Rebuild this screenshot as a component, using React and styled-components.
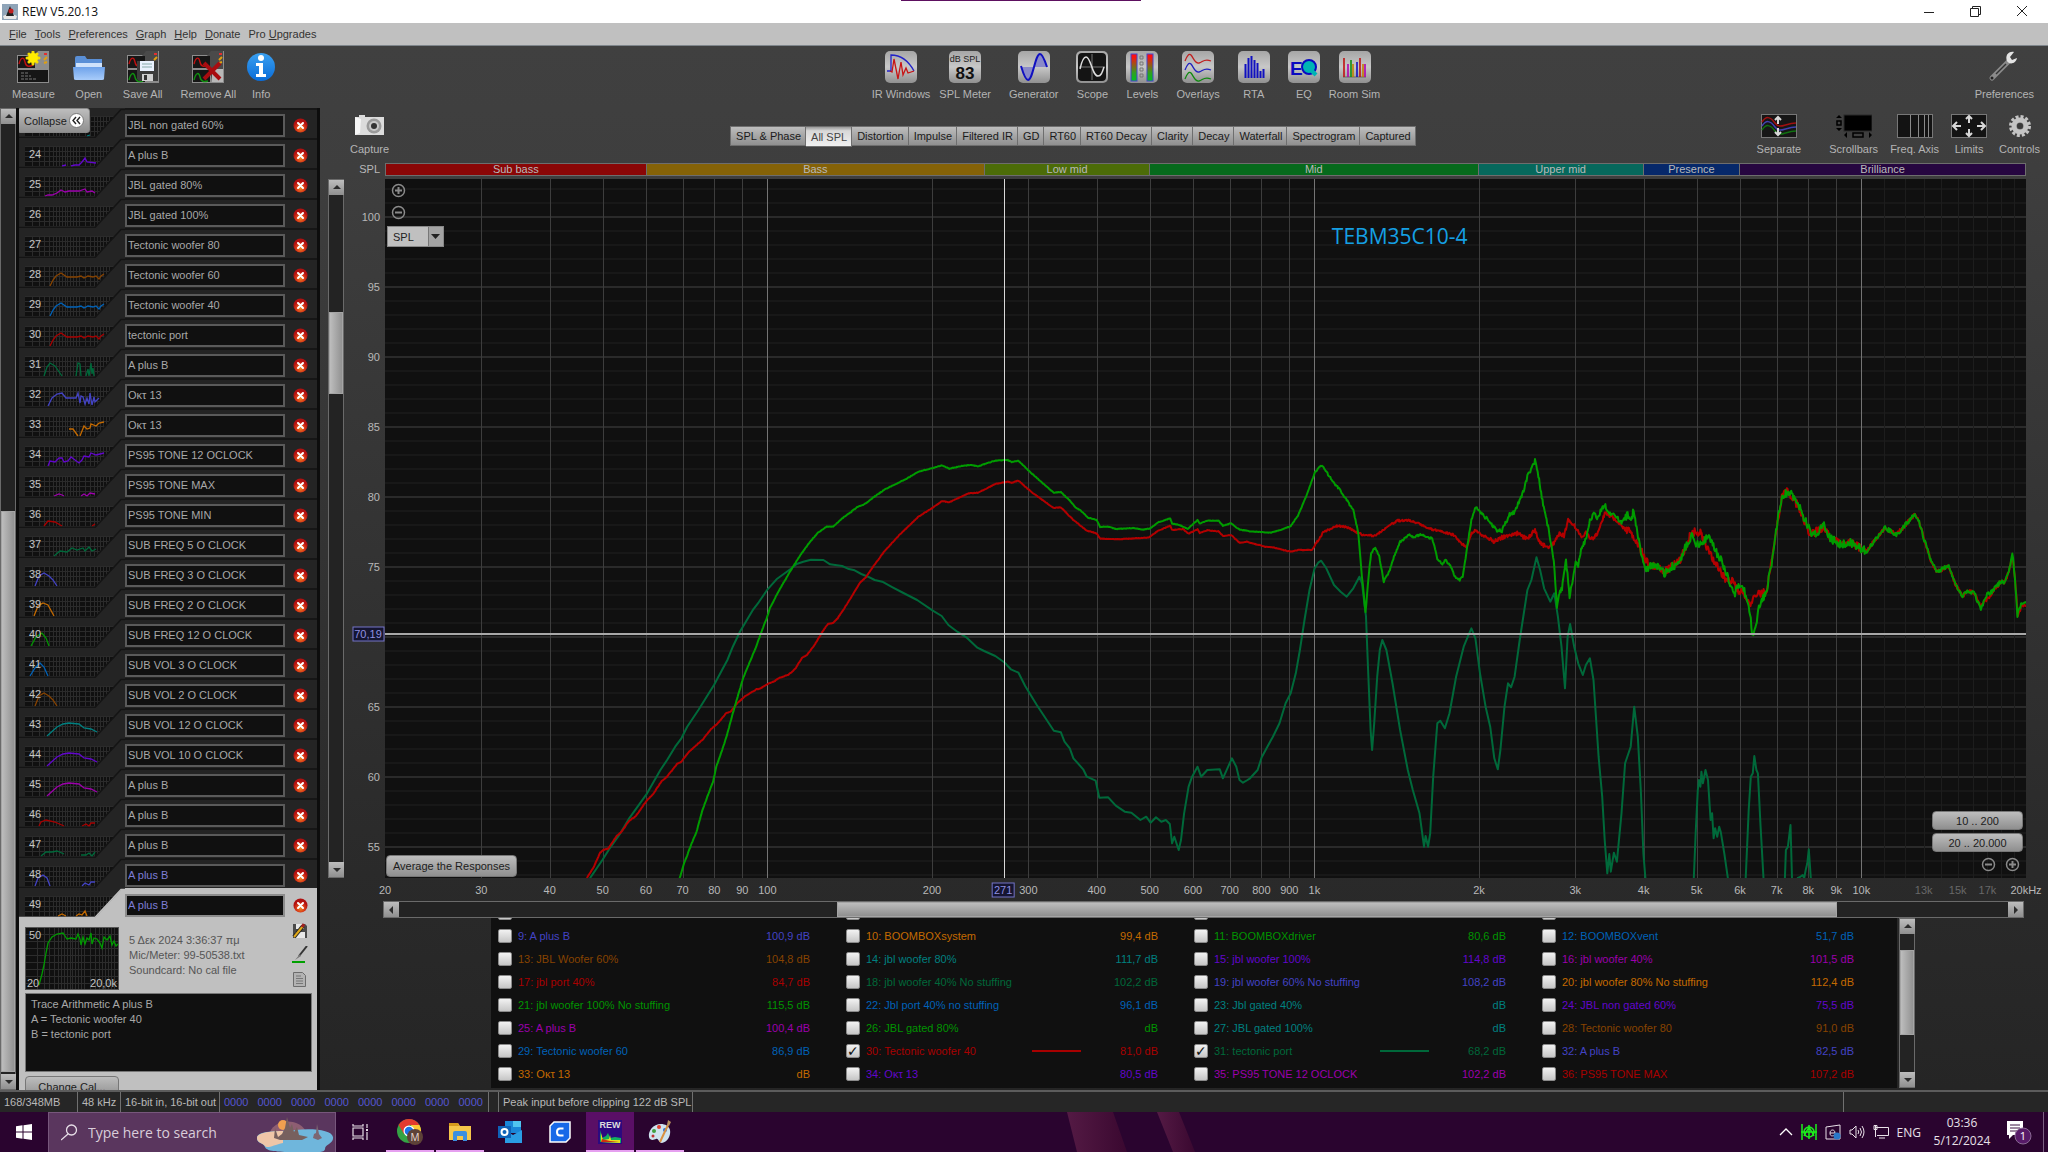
import React from 'react'
import styled, { createGlobalStyle, css } from 'styled-components'

const GlobalStyle = createGlobalStyle`
  * { box-sizing: border-box; }
  body {
    margin: 0;
    background: #262626;
    font-family: "Liberation Sans", Arial, sans-serif;
    font-size: 11px;
    overflow: hidden;
  }
  button, input, select, textarea {
    font: inherit;
    margin: 0;
    padding: 0;
    border-radius: 0;
  }
  svg { display: block; }
`

const silver = 'linear-gradient(#bdbdbd, #8f8f8f)'

const C = {
  indigo: '#4343c4',
  orange: '#c46a00',
  green: '#009400',
  blue: '#0062b8',
  brown: '#874300',
  teal: '#008080',
  violet: '#6206cc',
  magenta: '#9c00ac',
  red: '#a80000',
  forest: '#00683a',
}

/* ---------- window ---------- */

const Window = styled.div`
  display: flex;
  flex-direction: column;
  height: 100vh;
  overflow: hidden;
`

const TitleBar = styled.header`
  flex: none;
  display: flex;
  align-items: center;
  height: 23px;
  padding: 0 2px;
  background: #fff;
  color: #111;
  font-family: "Open Sans", "Noto Sans", sans-serif;
  font-size: 12px;
  position: relative;
`

const TitleText = styled.span`
  flex: 1;
  padding-left: 4px;
`

const TopStrip = styled.div`
  position: absolute;
  top: 0;
  left: 44%;
  width: 240px;
  height: 1px;
  background: #5d1060;
`

const WinButton = styled.button`
  width: 47px;
  height: 23px;
  border: 0;
  background: none;
  display: grid;
  place-items: center;
`

const MenuBar = styled.nav`
  flex: none;
  display: flex;
  align-items: center;
  gap: 8px;
  height: 23px;
  padding: 0 9px;
  background: #c0c0c0;
  border-bottom: 1px solid #7f868c;
  color: #333;
`

const MenuItem = styled.button`
  border: 0;
  background: none;
  color: inherit;
`

const Body = styled.div`
  flex: 1;
  min-height: 0;
  display: flex;
  flex-direction: column;
  background: linear-gradient(#404040, #3e3e3e 12%, #2b2b2b 75%, #252525);
`

/* ---------- toolbars ---------- */

const Toolbar = styled.div`
  flex: none;
  display: flex;
  justify-content: space-between;
  height: 62px;
  padding: 5px 14px 0 12px;
`

const ToolGroup = styled.div`
  display: flex;
  gap: ${p => p.$gap || 18}px;
`

const Tool = styled.button`
  display: flex;
  flex-direction: column;
  align-items: center;
  align-self: flex-start;
  gap: 5px;
  border: 0;
  background: none;
  color: #b4b4b4;
  line-height: 13px;
  white-space: nowrap;
`

const Main = styled.div`
  flex: 1;
  min-height: 0;
  display: flex;
`

/* ---------- scrollbars ---------- */

const Bar = styled.div`
  display: flex;
  flex-direction: ${p => (p.$row ? 'row' : 'column')};
  background: #232323;
  border: 1px solid #6a6a6a;
  ${p => (p.$row ? 'height: 17px;' : 'width: 16px;')}
`

const ArrowButton = styled.button`
  flex: none;
  width: 15px;
  height: 15px;
  border: 0;
  background: ${silver};
  display: grid;
  place-items: center;
`

const Space = styled.div`
  flex: ${p => p.$grow} 1 0;
`

const Thumb = styled(Space)`
  background: ${p => (p.$row ? silver : 'linear-gradient(90deg, #bdbdbd, #929292)')};
  border: 1px solid #a5a5a5;
`

const arrows = {
  up: '0,5 4,1 8,5',
  down: '0,2 4,6 8,2',
  left: '5,0 1,4 5,8',
  right: '2,0 6,4 2,8',
}

function Arrow({ dir }) {
  return (
    <ArrowButton aria-label={dir}>
      <svg width="8" height="8"><polygon points={arrows[dir]} fill="#2c2c2c" /></svg>
    </ArrowButton>
  )
}

function Scrollbar({ row, parts, className }) {
  return (
    <Bar $row={row} className={className}>
      <Arrow dir={row ? 'left' : 'up'} />
      <Space $grow={parts[0]} />
      <Thumb $row={row} $grow={parts[1]} />
      <Space $grow={parts[2]} />
      <Arrow dir={row ? 'right' : 'down'} />
    </Bar>
  )
}

/* ---------- measurement list ---------- */

const Side = styled.aside`
  flex: none;
  position: relative;
  width: 304px;
  overflow: hidden;
  background: #242424;
  border: solid #0d0d0d;
  border-width: 0 3px;
`

const Row = styled.div`
  display: flex;
  align-items: center;
  height: 30px;
`

const NameBox = styled.input`
  width: 160px;
  height: 23px;
  padding: 0 1px;
  background: #101010;
  border: 2px solid ${p => (p.$active ? '#8c8c8c' : '#5a5a5a')};
  color: ${p => p.$color || '#a8a8a8'};
`

const DeleteButton = styled.button`
  margin-left: 8px;
  width: 15px;
  height: 15px;
  border: 0;
  background: none;
`

const Collapse = styled.button`
  position: absolute;
  left: -2px;
  top: 0;
  width: 73px;
  height: 25px;
  display: flex;
  align-items: center;
  justify-content: space-between;
  padding: 0 5px 0 6px;
  border: 1px solid #888;
  border-radius: 3px;
  background: ${silver};
  color: #1c1c1c;
`

const Details = styled.div`
  height: 172px;
  padding: 9px 5px 0 6px;
  background: #c0c0c0;
`

const DetailTop = styled.div`
  display: flex;
  height: 66px;
`

const DetailText = styled.div`
  flex: 1;
  padding: 6px 0 0 10px;
  line-height: 15px;
  color: #555;
`

const DetailIcons = styled.div`
  display: flex;
  flex-direction: column;
  gap: 7px;
  padding-right: 4px;
  margin-top: -4px;
`

const Notes = styled.textarea`
  display: block;
  width: 100%;
  height: 79px;
  padding: 3px 5px;
  border: 1px solid #777;
  background: #101010;
  color: #a8a8a8;
  line-height: 15px;
  resize: none;
`

const SilverButton = styled.button`
  height: ${p => p.$h || 22}px;
  width: ${p => p.$w}px;
  border: 1px solid #777;
  border-radius: 4px;
  background: ${silver};
  color: #1c1c1c;
  white-space: nowrap;
`

const ChangeCal = styled(SilverButton)`
  display: block;
  margin-top: 4px;
`

const BUMP = '31,28 34,22 37,18 42,15 48,19 58,19 62,18 65,20 69,18 74,19 77,18 80,21 82,18 85,16'
const HUMP = '16,28 20,18 25,15 30,18 34,22 38,28'
const ARCH = '28,28 38,19 44,16 50,15 60,16 65,20 72,21 78,24'

const rows = [
  ['', 'JBL non gated 60%', C.teal, ['68,28 71,27']],
  [24, 'A plus B', C.violet, ['43,28 47,27', '52,28 56,27 60,27 63,24 66,20 68,24 77,25']],
  [25, 'JBL gated 80%', C.magenta, ['26,28 29,27 33,27 38,25 42,22 46,24 50,23 60,23 66,21 68,24 73,23 76,25']],
  [26, 'JBL gated 100%', C.green, []],
  [27, 'Tectonic woofer 80', C.teal, []],
  [28, 'Tectonic woofer 60', C.brown, [BUMP]],
  [29, 'Tectonic woofer 40', C.blue, [BUMP]],
  [30, 'tectonic port', C.red, [BUMP]],
  [31, 'A plus B', C.forest, ['25,28 28,19 31,15 36,18 43,28', '57,28 59,15 61,16 62,28', '67,28 69,21 70,28 72,15 73,26 74,20 75,28']],
  [32, 'Οκτ 13', C.indigo, ['29,28 33,20 38,16 43,15 47,20 57,20 59,15 61,25 62,18 64,19 66,26 68,20 70,26 71,15 73,27 75,19 76,24 80,20']],
  [33, 'Οκτ 13', C.orange, ['50,21 54,21 59,28', '61,28 65,18 68,21 71,20 72,16 77,18 80,15 85,14']],
  [34, 'PS95 TONE 12 OCLOCK', C.violet, ['29,28 31,23 36,24 40,20 43,20 45,24 49,23 52,19 56,22 60,25 63,22 65,18 70,19 72,15 77,17 85,15']],
  [35, 'PS95 TONE MAX', C.magenta, ['35,28 40,26 43,27 45,28', '62,28 65,26 68,28 71,25 76,26']],
  [36, 'PS95 TONE MIN', C.red, ['25,28 29,23 36,24 43,28', '73,28 76,26']],
  [37, 'SUB FREQ 5 O CLOCK', C.forest, ['35,28 41,23 48,24 53,20 58,22 64,20 66,23 70,19 73,23 77,21']],
  [38, 'SUB FREQ 3 O CLOCK', C.indigo, [HUMP]],
  [39, 'SUB FREQ 2 O CLOCK', C.orange, ['15,28 19,18 24,15 29,17 35,28']],
  [40, 'SUB FREQ 12 O CLOCK', C.green, ['12,28 17,19 23,15 27,20 30,28']],
  [41, 'SUB VOL 3 O CLOCK', C.blue, ['11,28 16,20 21,15 25,19 29,28']],
  [42, 'SUB VOL 2 O CLOCK', C.brown, [HUMP]],
  [43, 'SUB VOL 12 O CLOCK', C.teal, [ARCH]],
  [44, 'SUB VOL 10 O CLOCK', C.violet, [ARCH]],
  [45, 'A plus B', C.magenta, [ARCH]],
  [46, 'A plus B', C.red, ['20,28 22,24 27,22 36,24 45,28', '63,28 67,26 70,28 72,25 76,25']],
  [47, 'A plus B', C.forest, ['22,28 27,24 33,24 38,23 45,26', '62,27 67,27 70,25 73,28 76,24']],
  [48, 'A plus B', C.indigo, ['16,28 19,20 24,17 28,20 31,28', '63,28 66,25 70,27 72,24 76,24']],
  [49, 'A plus B', C.orange, ['39,28 43,26 47,28', '57,28 60,26 63,27 66,23 68,28']],
]

const gridX = [13, 20, 25, 30, 34, 37, 40, 43, 46, 48, 51, 54, 57, 60, 66, 71, 75, 78, 81, 84, 87, 90]

function MiniTrace({ num, color, traces, active }) {
  return (
    <svg width="106" height="30">
      <rect x="6" y="8" width="96" height="20" fill="#101010" />
      <g stroke="#2b2b2b">
        {gridX.map(x => <path key={x} d={`M${x + 0.5} 8V28`} />)}
        {[8, 13, 18, 23].map(y => <path key={y} d={`M6 ${y + 0.5}H101`} />)}
      </g>
      {traces.map(t => (
        <polyline key={t} points={t} fill="none" stroke={color} strokeWidth="1.3" />
      ))}
      <polygon points="76,30 103,1 106,1 106,30" fill={active ? '#c0c0c0' : '#242424'} />
      <path d="M0 29.500H76L102 1.500H106" fill="none" stroke={active ? '#c0c0c0' : '#141414'} strokeWidth="1.500" />
      <text x="10" y="20" fill="#c4c4c4" fontSize="11">{num}</text>
    </svg>
  )
}

const RowRest = styled.div`
  flex: 1;
  display: flex;
  align-items: center;
  height: 30px;
  padding-top: 2px;
  border-top: 2px solid ${p => (p.$active ? '#c0c0c0' : '#161616')};
  background: ${p => (p.$active ? '#c0c0c0' : 'none')};
`

function CloseIcon() {
  return (
    <svg width="15" height="15" viewBox="0 0 15 15">
      <circle cx="7.500" cy="7.500" r="7" fill="url(#redball)" />
      <path d="M5 5l5 5M10 5l-5 5" stroke="#fff" strokeWidth="2" strokeLinecap="round" />
    </svg>
  )
}

function Sidebar() {
  return (
    <Side>
      {rows.map(([num, name, color, traces]) => {
        const active = num === 49
        return (
          <Row key={num}>
            <MiniTrace num={num} color={color} traces={traces} active={active} />
            <RowRest $active={active}>
              <NameBox
                aria-label={`Measurement ${num}`}
                defaultValue={name}
                $active={active}
                $color={num >= 48 ? '#7d7dd6' : undefined}
              />
              <DeleteButton aria-label="Remove"><CloseIcon /></DeleteButton>
            </RowRest>
          </Row>
        )
      })}
      <Details>
        <DetailTop>
          <svg width="94" height="63">
            <rect x="0.500" y="0.500" width="93" height="62" fill="#101010" stroke="#555" />
            <g stroke="#2c2c2c">
              {gridX.map(x => <path key={x} d={`M${x - 0.5} 1V62`} />)}
              {[7, 14, 21, 28, 35, 42, 49, 56].map(y => <path key={y} d={`M1 ${y + 0.5}H93`} />)}
            </g>
            <polyline
              points="14,58 17,47 19,38 21,26 23,16 27,10 32,7 38,6 42,12 46,11 51,12 53,7 55,12 56,18 58,10 60,17 62,11 64,13 66,6 67,17 69,11 72,12 75,16 77,21 79,10 82,13 85,9 87,18 89,14 91,19 93,17"
              fill="none" stroke="#009a00" strokeWidth="1.300"
            />
            <text x="4" y="12" fill="#c4c4c4" fontSize="11">50</text>
            <text x="2" y="60" fill="#c4c4c4" fontSize="11">20</text>
            <text x="92" y="60" fill="#c4c4c4" fontSize="11" textAnchor="end">20,0k</text>
          </svg>
          <DetailText>
            <div>5 Δεκ 2024 3:36:37 πμ</div>
            <div>Mic/Meter: 99-50538.txt</div>
            <div>Soundcard: No cal file</div>
          </DetailText>
          <DetailIcons>
            <svg width="16" height="16">
              <path d="M1 1h12l2 2v12H1z" fill="#4a4a4a" />
              <path d="M4 1h8v5H4zM3 9h10v6H3z" fill="#e8e8e8" />
              <path d="M2 14L11 3" stroke="#222" strokeWidth="4" />
              <path d="M2 14L11 3" stroke="#e0a818" strokeWidth="2" />
              <path d="M10 4l2-3" stroke="#a02020" strokeWidth="3" />
            </svg>
            <svg width="16" height="18">
              <path d="M15 0L7 10" stroke="#333" strokeWidth="2" />
              <path d="M8 8l-5 6 6-4z" fill="#777" />
              <path d="M0 16h13" stroke="#00a000" strokeWidth="2" />
            </svg>
            <svg width="16" height="17">
              <path d="M1.500 1.500h9l3 3v11h-12z" fill="#b2b2b2" stroke="#6c6c6c" />
              <path d="M4 5h5M4 7.500h7M4 10h7M4 12.500h7" stroke="#777" />
            </svg>
          </DetailIcons>
        </DetailTop>
        <Notes
          aria-label="Notes"
          defaultValue={'Trace Arithmetic A plus B\nA = Tectonic woofer 40\nB = tectonic port'}
        />
        <ChangeCal $w={94}>Change Cal...</ChangeCal>
      </Details>
      <Collapse>
        Collapse
        <svg width="15" height="15">
          <circle cx="7.500" cy="7.500" r="7" fill="#fff" stroke="#777" />
          <path d="M7 4L4 7.500 7 11M11 4L8 7.500 11 11" fill="none" stroke="#222" strokeWidth="1.400" />
        </svg>
      </Collapse>
    </Side>
  )
}

/* ---------- tool icons ---------- */

function Plate({ dark, children }) {
  return (
    <svg width="32" height="32" viewBox="0 0 32 32">
      <rect width="32" height="32" rx="5" fill="url(#plate)" />
      {dark && <rect x="2" y="2" width="28" height="28" rx="4" fill="#141414" />}
      {children}
    </svg>
  )
}

const irIcon = (
  <Plate>
    <path d="M2 20h4V4c9 0 17 5 23 16" fill="none" stroke="#2222c8" strokeWidth="1.300" />
    <path d="M5 20l2 1 2-13 4 20 3-17 2 13 3-7 2 5 6-2" fill="none" stroke="#c81414" strokeWidth="1.300" />
  </Plate>
)
const splIcon = (
  <Plate>
    <text x="16" y="11" fontSize="9" textAnchor="middle" fill="#222">dB SPL</text>
    <text x="16" y="28" fontSize="17" fontWeight="bold" textAnchor="middle" fill="#111">83</text>
  </Plate>
)
const genIcon = (
  <Plate>
    <path d="M3 16h13C14 24 12 29 10 29S6 25 3 16zM16 16C18 8 20 3 22 3s4 4 7 13z" fill="#8a8ac8" />
    <path d="M3 15C6 25 8 29 10 29c5 0 7-26 12-26 2 0 4 4 7 13" fill="none" stroke="#1010c0" strokeWidth="2" />
  </Plate>
)
const scopeIcon = (
  <Plate dark>
    <path d="M16 3v26M3 16h26" stroke="#777" />
    <path d="M4 18C6 9 8 6 10 6c5 0 6 19 12 19 3 0 4-3 6-9" fill="none" stroke="#ddd" strokeWidth="1.500" />
  </Plate>
)
const levelsIcon = (
  <Plate>
    <rect x="5" y="3" width="6" height="27" fill="url(#level)" stroke="#4444cc" />
    <rect x="21" y="3" width="6" height="27" fill="url(#level)" stroke="#4444cc" />
    <path d="M14 5h3v3h-3zM14 11h3v3h-3zM14 17h3v3h-3zM14 23h3v3h-3z" fill="none" stroke="#777" />
  </Plate>
)
const overlaysIcon = (
  <Plate>
    {[['#c02020', 0], ['#2020c0', 9], ['#108a10', 18]].map(([c, y]) => (
      <path key={c} d={`M3 ${10 + y}C5 ${5 + y} 7 ${2 + y} 9 ${4 + y}S13 ${13 + y} 17 ${12 + y}s5 -5 12 -2`} fill="none" stroke={c} strokeWidth="1.300" />
    ))}
  </Plate>
)
const rtaIcon = (
  <Plate>
    <path d="M7.500 27V13M10.500 27V7M13.500 27V5M16.500 27V9M19.500 27V12M22.500 27V20M25.500 27V18" stroke="#1010c0" strokeWidth="2" />
  </Plate>
)
const eqIcon = (
  <Plate>
    <text x="2" y="24" fontSize="19" fontWeight="bold" fill="#0a0ac0">E</text>
    <circle cx="21" cy="16" r="7" fill="#00b4b4" stroke="#0a0ac0" strokeWidth="2" />
    <path d="M22 18l6 6" stroke="#00b4b4" strokeWidth="4" />
  </Plate>
)
const roomIcon = (
  <Plate>
    <path d="M4 26h23" stroke="#666" />
    {[[5, 7, '#c01010'], [9, 13, '#b000b0'], [12, 9, '#109010'], [14, 13, '#c08000'], [18, 11, '#1010c0'], [21, 7, '#c01010'], [24, 13, '#c08000'], [26, 13, '#b000b0']].map(([x, y, c]) => (
      <path key={x} d={`M${x} ${y}V26`} stroke={c} strokeWidth="1.600" />
    ))}
  </Plate>
)

function MeterBase({ children, stack }) {
  return (
    <svg width="32" height="32" viewBox="0 0 32 32">
      <path d="M0 4h18l3-4h11v32H0z" fill="#8c8c8c" />
      {stack && <path d="M15 5l4-5h12v30H20z" fill="#4a4a4a" />}
      <rect x="1" y="5" width="17" height="12" fill="#161616" />
      <path d="M2 13c2-8 5-7 6-2s4 5 8 3" fill="none" stroke="#c01010" strokeWidth="1.400" />
      <rect x="1" y="19" width={stack ? 17 : 30} height="12" fill="#161616" />
      {stack
        ? <path d="M2 29c2-8 5-8 6-3s4 5 8 4" fill="none" stroke="#109010" strokeWidth="1.400" />
        : <path d="M4 22h8M4 25h10M4 28h16" stroke="#777" strokeDasharray="3 1" />}
      <path d="M27 3h3" stroke="#e03030" strokeWidth="2" />
      <path d="M27 9l3-3M27 12l3-1" stroke="#e0a010" strokeWidth="2" />
      {children}
    </svg>
  )
}

const measureIcon = (
  <MeterBase>
    <path d="M16 1v12M10 7h12M12 3l8 8M20 3l-8 8" stroke="#f4dc00" strokeWidth="3" strokeLinecap="round" />
    <circle cx="16" cy="7" r="5" fill="#ffec00" />
  </MeterBase>
)
const openIcon = (
  <svg width="32" height="32" viewBox="0 0 32 32">
    <path d="M2 7q0-2 2-2h8l2 3h15v10H2z" fill="#5a8fd6" />
    <path d="M3 12h26v4H3z" fill="#cfe2fb" />
    <path d="M0 16h32l-1 12q0 1-2 1H3q-2 0-2-1z" fill="url(#folder)" />
  </svg>
)
const saveIcon = (
  <MeterBase stack>
    <path d="M10 10h21v20H12l-2-2z" fill="#3c3c3c" />
    <path d="M13 10h14v10H13z" fill="#eaf2ff" />
    <path d="M15 13h10M15 16h10" stroke="#8aa" />
    <path d="M15 23h11v7H15z" fill="#d0d0d0" />
    <path d="M17 24h3v5h-3z" fill="#333" />
  </MeterBase>
)
const removeIcon = (
  <MeterBase stack>
    <path d="M20 18h11v13H20z" fill="#b8b8b8" />
    <path d="M12 12l16 16M28 12L12 28" stroke="#a80c10" strokeWidth="4" />
  </MeterBase>
)
const infoIcon = (
  <svg width="32" height="32" viewBox="0 0 32 32">
    <circle cx="16" cy="16" r="14" fill="url(#info)" />
    <circle cx="16" cy="7" r="3" fill="#fff" />
    <path d="M11 12h7v11h3v3H11v-3h3v-8h-3z" fill="#fff" />
  </svg>
)
const wrenchIcon = (
  <svg width="32" height="32" viewBox="0 0 32 32">
    <path d="M4 27L21 10" stroke="#8a8a8a" strokeWidth="5" strokeLinecap="round" />
    <path d="M8 23L18 13" stroke="#333" strokeWidth="1.500" />
    <path d="M26 1c-6-1-9 4-7 9 2 4 9 3 10-3l-5 2-2-3z" fill="#e4e4e4" />
    <circle cx="4" cy="27" r="1.500" fill="#222" />
  </svg>
)

const tools = {
  left: [
    [['Measure', measureIcon]], [['Open', openIcon]], [['Save All', saveIcon]],
    [['Remove All', removeIcon], ['Info', infoIcon]],
  ],
  center: [
    [['IR Windows', irIcon], ['SPL Meter', splIcon]], [['Generator', genIcon]], [['Scope', scopeIcon]],
    [['Levels', levelsIcon]], [['Overlays', overlaysIcon]], [['RTA', rtaIcon]],
    [['EQ', eqIcon], ['Room Sim', roomIcon]],
  ],
  right: [[['Preferences', wrenchIcon]]],
}

function ToolSet({ groups }) {
  return (
    <ToolGroup>
      {groups.map(g => (
        <ToolGroup key={g[0][0]} $gap={9}>
          {g.map(([label, icon]) => <Tool key={label}>{icon}{label}</Tool>)}
        </ToolGroup>
      ))}
    </ToolGroup>
  )
}

/* ---------- graph ---------- */

const Graph = styled.main`
  flex: 1;
  min-width: 0;
  display: flex;
  flex-direction: column;
`

const GraphHeader = styled.div`
  flex: none;
  display: flex;
  justify-content: space-between;
  height: 55px;
  padding: 6px 8px 0 30px;
`

const Tabs = styled.div`
  display: flex;
  align-items: flex-start;
  margin-top: 12px;
  height: 21px;
`

const Tab = styled.button`
  height: ${p => (p.$on ? 21 : 20)}px;
  padding: 0 4px 0 5px;
  border: 1px solid #6e6e6e;
  border-left-width: ${p => (p.$first ? 1 : 0)}px;
  background: ${p => (p.$on ? 'linear-gradient(#999, #d8d8d8 20%, #f0f0f0)' : silver)};
  color: ${p => (p.$on ? '#444' : '#1a1a1a')};
`

const PlotGrid = styled.div`
  flex: 1;
  min-height: 0;
  display: grid;
  grid-template-columns: 24px 41px minmax(0, 1fr) 22px;
  grid-template-rows: 16px minmax(0, 1fr) 23px 17px;
`

const AxisTitle = styled.div`
  grid-area: 1 / 2;
  text-align: right;
  padding-right: 5px;
  line-height: 12px;
  color: #b8b8b8;
`

const Bands = styled.div`
  grid-area: 1 / 3;
  display: flex;
  height: 13px;
  border: 1px solid #6d6d6d;
`

const Band = styled.div`
  flex: ${p => p.$grow} 1 0;
  background: ${p => p.$bg};
  color: #b9b9b9;
  text-align: center;
  line-height: 11px;
  & + & { border-left: 1px solid #6d6d6d; }
`

const PlotScroll = styled(Scrollbar)`
  grid-area: 2 / 1;
  justify-self: end;
`

const YAxis = styled.svg`
  grid-area: 2 / 2;
  width: 100%;
  height: 100%;
`

const XAxis = styled.svg`
  grid-area: 3 / 3;
  width: 100%;
  height: 100%;
  overflow: visible;
`

const Plot = styled.div`
  grid-area: 2 / 3;
  position: relative;
  background: #101010;
`

const PlotSvg = styled.svg`
  width: 100%;
  height: 100%;
`

const HScroll = styled(Scrollbar)`
  grid-area: 4 / 3;
  margin: 0 2px 0 -2px;
`

const Overlay = styled.div`
  position: absolute;
  display: flex;
  flex-direction: ${p => (p.$row ? 'row' : 'column')};
  gap: ${p => p.$gap || 0}px;
  ${p => p.$at}
`

const ZoomButton = styled.button`
  width: 15px;
  height: 15px;
  border: 0;
  background: none;
`

const UnitSelect = styled.div`
  position: relative;
  width: 57px;
  height: 21px;
`

const Select = styled.select`
  appearance: none;
  width: 100%;
  height: 100%;
  padding-left: 5px;
  border: 1px solid #888;
  background: linear-gradient(90deg, #c0c0c0 40px, #777 40px, #777 41px, #a4a4a4 41px);
  color: #222;
`

const SelectArrow = styled.svg`
  position: absolute;
  right: 4px;
  top: 8px;
  pointer-events: none;
`

const PlotTitle = styled.div`
  position: absolute;
  top: 42px;
  left: 57.700%;
  color: #15a0e4;
  font-family: "Open Sans", "Noto Sans", sans-serif;
  font-size: 21px;
  line-height: 30px;
`

function Zoom({ plus }) {
  return (
    <ZoomButton aria-label={plus ? 'Zoom in' : 'Zoom out'}>
      <svg width="15" height="15">
        <circle cx="7.500" cy="7.500" r="6" fill="none" stroke="#8a8a8a" strokeWidth="1.500" />
        <path d={plus ? 'M4 7.500h7M7.500 4v7' : 'M4 7.500h7'} stroke="#8a8a8a" strokeWidth="2" />
      </svg>
    </ZoomButton>
  )
}

// plot space is 1641 x 699: three decades from 20 Hz, 14 units per dB
const W = 1641
const H = 699
const fx = f => (Math.log10(f / 20) / 3) * W
const dy = db => 38 + (100 - db) * 14

const vLines = []
for (let d = 10; d <= 10000; d *= 10) {
  for (let k = 1; k < 10; k++) {
    const f = d * k
    if (f > 20 && f < 20000) vLines.push([f, k === 1 ? '#747474' : '#3d3d3d'])
  }
}
for (let f = 11000; f < 20000; f += 1000) vLines.push([f, '#1d1d1d'])

const hLines = []
for (let db = 53; db <= 102; db++) hLines.push([db, db % 5 ? '#181818' : '#2a2a2a'])

const nums = s => s.trim().split(/\s+/).map(p => p.split(',').map(Number))
// the two halves of a trace are digitised on different x scales
const low = s => nums(s).map(([x, y]) => [175 + x / 2.24, 251 + y / 3])
const high = s => nums(s).map(([x, y]) => [865 + x / 1.965, 251 + y / 3])

function rough(points, seed) {
  let r = seed
  const rand = () => {
    r = (r * 16807) % 2147483647
    return r / 2147483647 - 0.5
  }
  const out = []
  for (let i = 0; i < points.length - 1; i++) {
    const [x0, y0] = points[i]
    const [x1, y1] = points[i + 1]
    const n = Math.max(1, Math.round((x1 - x0) / 0.7))
    for (let k = 0; k < n; k++) {
      const x = x0 + ((x1 - x0) * k) / n
      const amp = x < 930 ? 0.6 : x < 1100 ? 2 : x < 1240 ? 4 : x < 1480 ? 8 : 4
      out.push([x, y0 + ((y1 - y0) * k) / n + rand() * amp])
    }
  }
  out.push(points[points.length - 1])
  return out
}

const str = pts => pts.map(([x, y]) => `${x.toFixed(1)},${y.toFixed(1)}`).join(' ')

const greenTrace = [
  ...low(`268,1345 278,1300 286,1272 295,1240 306,1205 318,1145 330,1100 343,1055 350,1010 362,965 374,915
    386,855 398,800 410,745 427,690 438,655 450,610 463,565 470,535 487,490 502,455 522,410 540,372 560,336
    578,308 597,290 612,290 632,265 648,250 665,232 682,223 702,202 728,178 752,162 775,147 803,125 833,115
    856,106 872,116 900,108 920,105 937,109 955,100 975,92 1003,90 1012,96 1027,92 1048,120 1080,158 1106,188
    1122,186 1142,212 1155,233 1165,240 1183,263 1202,270 1210,291 1228,290 1245,297 1285,294 1305,299
    1322,295 1340,277 1367,265 1371,281 1388,285 1406,297 1428,270 1433,281 1450,272 1475,272 1485,287
    1503,280 1522,299 1540,302`),
  ...high(`0,304 40,308 60,300 80,288 95,255 110,200 127,130 134,114 140,108 146,114 152,130 165,160 177,180
    190,210 203,240 213,310 220,440 227,548 233,440 238,370 246,352 254,380 263,455 275,420 283,380 295,335
    312,315 322,322 336,313 345,320 358,325 368,385 378,402 384,390 395,410 402,438 412,450 418,440 428,340
    435,270 443,230 455,250 472,275 484,302 495,302 510,255 520,245 535,195 545,140 555,110 560,92 568,150
    576,225 587,300 597,390 603,530 608,490 613,475 621,390 628,500 640,400 645,405 652,350 660,330 668,270
    677,247 682,262 697,224 706,250 717,255 730,280 742,255 750,262 754,242 764,330 777,425 785,405 800,405
    815,430 830,410 845,395 855,355 868,318 878,345 902,322 915,365 928,395 938,440 953,490 960,465 970,480
    980,520 988,620 993,600 1000,530 1015,480 1025,400 1035,290 1042,220 1050,190 1062,185 1075,215 1088,260
    1105,320 1128,288 1140,325 1160,343 1180,338 1212,365 1230,325 1248,293 1270,315 1285,290 1305,252
    1312,262 1325,330 1340,400 1350,425 1373,407 1385,460 1400,497 1412,482 1424,490 1436,540 1447,495
    1455,490 1475,455 1482,460 1490,430 1498,372 1503,440 1508,555 1515,525 1525,520`),
]

const redTrace = [
  ...low(`60,1345 75,1312 90,1268 97,1260 108,1256 127,1218 138,1205 155,1172 170,1158 195,1110 207,1095
    228,1053 240,1040 262,1002 272,995 287,968 320,928 340,895 352,882 372,850 382,845 397,820 415,798
    440,778 450,775 465,762 480,754 490,744 512,734 527,716 543,682 552,677 570,645 588,605 600,582 612,578
    622,565 640,528 660,485 672,458 685,442 700,412 728,362 760,315 803,260 835,233 856,213 872,217 915,190
    937,188 975,162 1003,155 1012,158 1027,152 1055,185 1106,234 1122,232 1150,270 1180,302 1202,310
    1210,326 1245,328 1318,323 1340,302 1367,287 1371,300 1395,297 1408,311 1428,298 1433,309 1450,301
    1475,304 1485,318 1503,315 1522,338 1540,335`),
  ...high(`0,338 30,350 45,352 60,358 80,365 95,360 122,360 132,335 145,305 172,287 190,292 220,314 245,318
    270,290 290,272 313,271 330,280 355,297 385,308 400,315 415,340 426,352 435,310 443,300 455,315 480,335
    495,322 525,310 545,328 560,300 570,340 585,352 597,340 608,310 617,318 625,270 640,290 650,318 660,310
    673,328 685,305 697,250 715,265 730,290 750,310 765,350 777,390 785,405 800,405 815,425 830,410 845,390
    868,305 885,308 905,375 920,415 938,455 950,455 960,480 975,500 985,528 992,490 1002,490 1015,480
    1025,400 1035,290 1045,200 1052,180 1065,200 1080,235 1100,315 1128,290 1140,325 1160,343 1180,338
    1212,362 1230,325 1248,296 1270,312 1285,290 1305,255 1312,262 1325,330 1340,400 1350,425 1373,410
    1385,460 1400,497 1412,482 1424,490 1436,530 1455,495 1475,455 1482,460 1490,430 1498,380 1503,440
    1509,560 1515,530 1525,525`),
]

const portTraces = [
  [
    ...low(`67,1345 95,1290 113,1252 135,1210 155,1165 195,1090 225,1020 240,990 258,950 272,925 285,890
      310,840 345,765 375,690 387,650 403,605 433,538 445,517 465,478 485,448 508,425 522,412 530,402 545,395
      562,389 590,390 605,403 632,408 645,416 660,421 675,432 690,440 705,450 722,455 745,472 765,486 800,510
      835,542 855,558 870,585 890,605 910,622 935,653 950,663 975,678 995,697 1010,718 1027,728 1042,768
      1052,790 1068,825 1106,902 1122,907 1130,935 1142,955 1150,985 1172,1018 1180,1040 1200,1052 1208,1103
      1228,1102 1245,1127 1265,1145 1280,1148 1300,1170 1313,1160 1323,1178 1335,1162 1347,1175 1357,1170
      1366,1182 1371,1240 1376,1220 1386,1260 1391,1230 1398,1150 1408,1070 1416,1040 1428,1010 1436,1040
      1450,1020 1478,1018 1485,1045 1495,1015 1505,985 1515,1010 1522,1050 1530,1058 1540,1050`),
    ...high(`0,1045 15,1020 23,982 35,948 45,920 58,880 70,820 80,790 90,730 98,660 107,570 117,480 127,415
      134,398 140,392 150,415 165,465 178,485 190,500 203,475 215,440 220,460 228,560 232,720 237,900 240,960
      244,880 250,740 255,660 260,630 268,660 280,760 295,900 310,1020 320,1080 333,1150 342,1250 345,1218
      350,1250 354,1210 360,1040 368,880 374,872 383,895 392,850 405,740 420,650 428,620 435,595 443,625
      452,730 463,830 472,890 480,985 487,1018 492,960 500,830 507,760 513,772 520,740 530,630 545,480
      553,450 563,382 570,420 578,475 590,515 598,490 605,560 612,650 619,775 624,620 629,582 637,650 645,700
      654,735 660,705 668,685 675,750 685,980 692,1100 697,1230 702,1330 706,1272 709,1325 715,1268 721,1295
      730,1150 737,1000 748,950 755,830 762,920 768,1080 773,1270 777,1345`),
  ],
  high(`872,1345 876,1200 880,1080 882,1050 885,1070 887,1025 890,1060 895,1020 900,1050 903,1120 905,1170
    908,1150 911,1225 914,1195 918,1220 922,1190 925,1205 932,1270 939,1345`),
  high('974,1345 980,1140 984,1040 988,1030 991,978 995,1020 998,1030 1003,1180 1009,1345'),
  high('1051,1345 1053,1260 1057,1250 1062,1185 1065,1345'),
  high('1075,1345 1080,1342 1086,1335 1089,1345 1092,1320 1095,1300 1098,1258 1102,1345'),
]

const bands = [
  ['Sub bass', 20, 60, '#8a0606'],
  ['Bass', 60, 250, '#856207'],
  ['Low mid', 250, 500, '#4c6c08'],
  ['Mid', 500, 2000, '#066a1c'],
  ['Upper mid', 2000, 4000, '#06685c'],
  ['Presence', 4000, 6000, '#06286a'],
  ['Brilliance', 6000, 20000, '#260640'],
]

const xLabels = [
  [20, '20'], [30, '30'], [40, '40'], [50, '50'], [60, '60'], [70, '70'], [80, '80'], [90, '90'], [100, '100'],
  [200, '200'], [300, '300'], [400, '400'], [500, '500'], [600, '600'], [700, '700'], [800, '800'], [900, '900'],
  [1000, '1k'], [2000, '2k'], [3000, '3k'], [4000, '4k'], [5000, '5k'], [6000, '6k'], [7000, '7k'], [8000, '8k'],
  [9000, '9k'], [10000, '10k'], [13000, '13k', 1], [15000, '15k', 1], [17000, '17k', 1], [20000, '20kHz'],
]

const line = { fill: 'none', strokeWidth: 2, strokeLinejoin: 'round' }

function Chart() {
  return (
    <PlotSvg viewBox={`0 0 ${W} ${H}`} preserveAspectRatio="none">
      {hLines.map(([db, c]) => <path key={db} d={`M0 ${dy(db)}H${W}`} stroke={c} strokeWidth="2" />)}
      {vLines.map(([f, c]) => <path key={f} d={`M${Math.round(fx(f)) + 0.5} 0V${H}`} stroke={c} />)}
      {portTraces.map((t, i) => <polyline key={i} points={str(t)} {...line} stroke="#00693a" />)}
      <polyline points={str(rough(redTrace, 77))} {...line} stroke="#b40000" />
      <polyline points={str(rough(greenTrace, 5))} {...line} stroke="#009c00" />
      <path d={`M0 455H${W}`} stroke="#a8a8a8" strokeWidth="2" />
      <path d={`M${Math.round(fx(271)) + 0.5} 0V${H}`} stroke="#d8d8d8" />
    </PlotSvg>
  )
}

function GraphPlot() {
  return (
    <PlotGrid>
      <AxisTitle>SPL</AxisTitle>
      <Bands>
        {bands.map(([name, a, b, bg]) => (
          <Band key={name} $grow={Math.round(1000 * Math.log10(b / a))} $bg={bg}>{name}</Band>
        ))}
      </Bands>
      <PlotScroll parts={[118, 80, 471]} />
      <YAxis>
        {[100, 95, 90, 85, 80, 75, 65, 60, 55].map(db => (
          <text key={db} x="36" y={`${(dy(db) / H) * 100}%`} dy="4" fill="#b8b8b8" textAnchor="end">{db}</text>
        ))}
        <rect x="9" y="448" width="31" height="14" fill="#151530" stroke="#7474c8" />
        <text x="24" y="459" fill="#9090e0" textAnchor="middle">70,19</text>
      </YAxis>
      <Plot>
        <Chart />
        <PlotTitle>TEBM35C10-4</PlotTitle>
        <Overlay $gap={7} $at="left: 6px; top: 4px;">
          <Zoom plus />
          <Zoom />
        </Overlay>
        <Overlay $at="left: 2px; top: 47px;">
          <UnitSelect>
            <Select aria-label="Y axis units"><option>SPL</option></Select>
            <SelectArrow width="9" height="6"><polygon points="0,0 9,0 4.500,5" fill="#222" /></SelectArrow>
          </UnitSelect>
        </Overlay>
        <Overlay $at="left: 1px; bottom: 1px;">
          <SilverButton $w={131}>Average the Responses</SilverButton>
        </Overlay>
        <Overlay $gap={3} $at="right: 3px; bottom: 26px;">
          <SilverButton $w={91} $h={19}>10 .. 200</SilverButton>
          <SilverButton $w={91} $h={19}>20 .. 20.000</SilverButton>
        </Overlay>
        <Overlay $row $gap={9} $at="right: 6px; bottom: 6px;">
          <Zoom />
          <Zoom plus />
        </Overlay>
      </Plot>
      <XAxis>
        {xLabels.map(([f, t, dim]) => (
          <text key={f} x={`${(fx(f) / W) * 100}%`} y="16" fill={dim ? '#686868' : '#b8b8b8'} textAnchor="middle">{t}</text>
        ))}
        <svg x={`${(fx(271) / W) * 100}%`} overflow="visible">
          <rect x="-12" y="5" width="22" height="14" fill="#151530" stroke="#7474c8" />
          <text x="-1" y="16" fill="#9090e0" textAnchor="middle">271</text>
        </svg>
      </XAxis>
      <HScroll row parts={[439, 999, 171]} />
    </PlotGrid>
  )
}

/* ---------- legend ---------- */

const LegendArea = styled.div`
  flex: none;
  display: grid;
  grid-template-columns: 171px minmax(0, 1fr) 16px 133px;
  height: 172px;
  padding-bottom: 2px;
`

const Legend = styled.div`
  display: flex;
  flex-direction: column;
  justify-content: flex-end;
  overflow: hidden;
  padding: 0 7px 3px;
  margin-right: 2px;
  background: #101010;
`

const LegendRow = styled.div`
  flex: none;
  display: grid;
  grid-template-columns: repeat(4, minmax(0, 1fr));
  height: 23px;
`

const Entry = styled.label`
  display: flex;
  align-items: center;
  padding-right: 36px;
  color: ${p => p.$color};
  white-space: nowrap;
`

const Check = styled.input`
  appearance: none;
  flex: none;
  width: 14px;
  height: 14px;
  margin-right: 6px;
  border: 1px solid #8a8a8a;
  border-radius: 2px;
  background: linear-gradient(#f2f2f2, #c6c6c6);
  ${p => p.defaultChecked && css`
    &:checked::after {
      content: "✓";
      display: block;
      color: #111;
      font: bold 14px/12px "DejaVu Sans", sans-serif;
    }
  `}
`

const Name = styled.span`
  flex: 1;
`

const Swatch = styled.span`
  width: 49px;
  height: 2px;
  background: currentColor;
`

const Level = styled.span`
  width: 77px;
  text-align: right;
`

const legend = [
  ['9: A plus B', '100,9 dB', C.indigo], ['10: BOOMBOXsystem', '99,4 dB', C.orange],
  ['11: BOOMBOXdriver', '80,6 dB', C.green], ['12: BOOMBOXvent', '51,7 dB', C.blue],
  ['13: JBL Woofer 60%', '104,8 dB', C.brown], ['14: jbl woofer 80%', '111,7 dB', C.teal],
  ['15: jbl woofer 100%', '114,8 dB', C.violet], ['16: jbl woofer 40%', '101,5 dB', C.magenta],
  ['17: jbl port 40%', '84,7 dB', C.red], ['18: jbl woofer 40% No stuffing', '102,2 dB', C.forest],
  ['19: jbl woofer 60% No stuffing', '108,2 dB', C.indigo], ['20: jbl woofer 80% No stuffing', '112,4 dB', C.orange],
  ['21: jbl woofer 100% No stuffing', '115,5 dB', C.green], ['22: Jbl port 40% no stuffing', '96,1 dB', C.blue],
  ['23: Jbl gated 40%', 'dB', C.teal], ['24: JBL non gated 60%', '75,5 dB', C.violet],
  ['25: A plus B', '100,4 dB', C.magenta], ['26: JBL gated 80%', 'dB', C.green],
  ['27: JBL gated 100%', 'dB', C.teal], ['28: Tectonic woofer 80', '91,0 dB', C.brown],
  ['29: Tectonic woofer 60', '86,9 dB', C.blue], ['30: Tectonic woofer 40', '81,0 dB', C.red, true],
  ['31: tectonic port', '68,2 dB', C.forest, true], ['32: A plus B', '82,5 dB', C.indigo],
  ['33: Οκτ 13', 'dB', C.orange], ['34: Οκτ 13', '80,5 dB', C.violet],
  ['35: PS95 TONE 12 OCLOCK', '102,2 dB', C.magenta], ['36: PS95 TONE MAX', '107,2 dB', C.red],
]

function LegendPanel() {
  return (
    <LegendArea>
      <span />
      <Legend>
        <LegendRow>
          {[5, 6, 7, 8].map(n => (
            <Entry key={n}><Check type="checkbox" aria-label={`Trace ${n}`} /></Entry>
          ))}
        </LegendRow>
        {[0, 1, 2, 3, 4, 5, 6].map(r => (
          <LegendRow key={r}>
            {legend.slice(r * 4, r * 4 + 4).map(([name, level, color, on]) => (
              <Entry key={name} $color={color}>
                <Check type="checkbox" defaultChecked={on} />
                <Name>{name}</Name>
                {on && <Swatch />}
                <Level>{level}</Level>
              </Entry>
            ))}
          </LegendRow>
        ))}
      </Legend>
      <Scrollbar parts={[16, 84, 38]} />
    </LegendArea>
  )
}

/* ---------- status bar ---------- */

const Status = styled.footer`
  flex: none;
  display: flex;
  height: 22px;
  background: #262626;
  border-top: 2px solid #5c5c5c;
  color: #b8b8b8;
  line-height: 21px;
  white-space: pre;
`

const StatusCell = styled.div`
  width: ${p => p.$w}px;
  padding-left: 4px;
  border-right: 1px solid #707070;
`

const Bits = styled(StatusCell)`
  display: flex;
  gap: 9px;
  color: #5555d0;
`

const StatusFill = styled.div`
  flex: 1;
  border-right: 1px solid #707070;
  margin-right: 204px;
`

/* ---------- taskbar ---------- */

const Taskbar = styled.div`
  flex: none;
  position: relative;
  display: flex;
  align-items: center;
  height: 40px;
  background: #2a042f;
  font-family: "Open Sans", "Noto Sans", sans-serif;
  color: #e8e0e8;
`

const Glow = styled.svg`
  position: absolute;
  left: 52%;
  top: 0;
`

const Start = styled.button`
  width: 48px;
  height: 40px;
  padding-left: 16px;
  border: 0;
  background: none;
`

const Search = styled.label`
  display: flex;
  align-items: center;
  width: 288px;
  height: 40px;
  padding-left: 12px;
  border: 1px solid #77577c;
  border-bottom: 0;
  background: #5a365e;
`

const SearchInput = styled.input`
  flex: 1;
  min-width: 0;
  margin-left: 10px;
  border: 0;
  background: none;
  font-size: 14px;
  &::placeholder { color: #d9cdda; opacity: 1; }
`

const Apps = styled.div`
  flex: 1;
  display: flex;
  gap: 2px;
`

const AppButton = styled.button`
  display: grid;
  place-items: center;
  width: 48px;
  height: 40px;
  border: 0;
  background: ${p => (p.$active ? '#5a0f66' : 'none')};
  box-shadow: ${p => (p.$open ? 'inset 0 -2px #e6a0f0' : 'none')};
`

const Tray = styled.div`
  display: flex;
  align-items: center;
  gap: 8px;
  padding-right: 4px;
  font-size: 12px;
`

const Clock = styled.div`
  width: 66px;
  text-align: center;
  line-height: 18px;
`

const Notice = styled.div`
  display: flex;
  padding: 0 3px;
`

const ShowDesktop = styled.div`
  width: 1px;
  height: 40px;
  background: #7a5f80;
`

function WindowsTaskbar() {
  return (
    <Taskbar>
      <Glow width="140" height="40">
        <polygon points="2,0 48,0 62,40 12,40" fill="url(#glow)" />
        <polygon points="92,0 114,0 130,40 108,40" fill="url(#glow)" />
      </Glow>
      <Start aria-label="Start">
        <svg width="16" height="16" fill="#fff">
          <path d="M0 2.200L6.500 1.300V7.500H0zM7.500 1.200L16 0V7.500H7.500zM0 8.500H6.500V14.700L0 13.800zM7.500 8.500H16V16L7.500 14.800z" />
        </svg>
      </Start>
      <Search>
        <svg width="17" height="17" fill="none" stroke="#e8dfe8" strokeWidth="1.300">
          <circle cx="10.500" cy="6" r="5" /><path d="M7 10L0 16" />
        </svg>
        <SearchInput aria-label="Search" placeholder="Type here to search" />
        <svg width="80" height="38" viewBox="0 0 80 38">
          <path d="M14 22C16 4 46 2 52 20z" fill="#b07a80" opacity=".6" />
          <circle cx="28" cy="11" r="5" fill="#f0a050" />
          <path d="M2 24c0-8 20-6 38-8s37 0 38 7-8 7-8 12-16 3-30 3-28 0-30-5-8-3-8-9z" fill="#6fb6dc" />
          <path d="M2 24c0-6 16-7 26-7v12c-9 2-16 6-18 3s-8-3-8-8z" fill="#efc6a8" />
          <path d="M19 24l1-10 3 9 4-3 3-6 2-11 3 11 2-4 2 8 3-5 2 8 9 2-6 3-22 0z" fill="#77605e" />
          <path d="M58 24l1-4 2-1 1-9 2 10 3 4-4 2z" fill="#7c6672" />
        </svg>
      </Search>
      <Apps>
        <AppButton aria-label="Task view">
          <svg width="17" height="16" fill="none" stroke="#e8e0e8" strokeWidth="1.200">
            <path d="M1 4h10v8H1zM1 0v2h10V0M1 16v-2h10v2M15 0v4M15 8v8" /><path d="M14 6h2" strokeWidth="2" />
          </svg>
        </AppButton>
        <AppButton $open aria-label="Chrome">
          <svg width="26" height="26" viewBox="0 0 26 26">
            <circle cx="12" cy="12" r="12" fill="#34a344" />
            <path d="M1.600 6A12 12 0 0 1 22.400 6H12L7 15z" fill="#e33b2e" />
            <path d="M22.400 6A12 12 0 0 1 12 24l5-9-3-9z" fill="#fcc934" />
            <circle cx="12" cy="12" r="5.500" fill="#fff" /><circle cx="12" cy="12" r="4.300" fill="#1a73e8" />
            <circle cx="18" cy="18" r="8" fill="#5d4238" />
            <text x="18" y="22" fontSize="10" textAnchor="middle" fill="#e8dcd4">M</text>
          </svg>
        </AppButton>
        <AppButton $open aria-label="File Explorer">
          <svg width="22" height="20">
            <path d="M0 1h9l2 3h11v14H0z" fill="#f5c64a" /><path d="M0 1h9l1 3H0z" fill="#d69a1c" />
            <path d="M4 19v-8q0-2 2-2h10q2 0 2 2v8h-4v-5H8v5z" fill="#3b8fe0" />
          </svg>
        </AppButton>
        <AppButton aria-label="Outlook">
          <svg width="24" height="22">
            <path d="M7 0h16v12H7z" fill="#1a86d8" /><path d="M15 0h8v6h-8z" fill="#50c4f0" />
            <path d="M7 9l8 5 9-5v13H7z" fill="#2a9de4" /><path d="M0 5h13v12H0z" fill="#0f62b8" />
            <circle cx="6.500" cy="11" r="3" fill="none" stroke="#fff" strokeWidth="2" />
          </svg>
        </AppButton>
        <AppButton aria-label="C">
          <svg width="22" height="22">
            <path d="M5 1h16v16l-4 4H1V5z" fill="#1869e8" stroke="#fff" strokeWidth="1.500" />
            <path d="M14.500 7.500H11q-3 0-3 3.500t3 3.500h3.500" fill="none" stroke="#fff" strokeWidth="2" />
          </svg>
        </AppButton>
        <AppButton $open $active aria-label="REW">
          <svg width="24" height="24">
            <rect width="24" height="24" fill="#2c0a80" />
            <text x="12" y="8" fontSize="9" fontWeight="bold" textAnchor="middle" fill="#ddd" fontFamily="Liberation Sans">REW</text>
            <path d="M2 22V10l2 8 4-2 2-3 2 5 5-1 6 1v5z" fill="#10b060" />
            <path d="M3 22v-9l2 7 6-1 1-4 1 5 9 0v3z" fill="#e8e020" /><path d="M3 22l1-3 8 2 9 1z" fill="#d03010" />
          </svg>
        </AppButton>
        <AppButton $open aria-label="Paint">
          <svg width="24" height="24">
            <path d="M13 4C5 4 0 11 1 17c1 4 5 3 7 2 3-1 2 4 6 4 6-1 9-8 8-13-1-4-5-6-9-6z" fill="#cfe3ee" />
            <circle cx="6" cy="11" r="2" fill="#40a040" /><circle cx="11" cy="7" r="2" fill="#e04030" />
            <circle cx="5" cy="16" r="1.500" fill="#c03030" /><circle cx="17" cy="10" r="2" fill="#3070d0" />
            <path d="M12 22L20 5" stroke="#d89040" strokeWidth="2" /><path d="M19 5l1-5 3 2-2 4z" fill="#b89060" />
          </svg>
        </AppButton>
      </Apps>
      <Tray>
        <svg width="14" height="8" fill="none" stroke="#fff" strokeWidth="1.300"><path d="M1 7l6-6 6 6" /></svg>
        <svg width="16" height="16" fill="none" stroke="#1cf01c" strokeWidth="1.500">
          <path d="M1 0v16M15 0v16M8 1v14M0 8h16M3 12l5-9 5 9" /><circle cx="8" cy="8" r="5" />
        </svg>
        <svg width="16" height="16" fill="none" stroke="#e8e0e8">
          <path d="M1 3l14-2v14H1z" /><path d="M5 9h5c0-4-5-4-5 0s3 3 5 2" /><circle cx="12" cy="12" r="3.500" fill="#2a78c8" stroke="none" />
        </svg>
        <svg width="16" height="16" fill="none" stroke="#e8e0e8">
          <path d="M1 6h2l4-4v12l-4-4H1zM9 6q1.500 2 0 4M11 4q3 4 0 8M13 2q4 6 0 12" />
        </svg>
        <svg width="16" height="14" fill="none" stroke="#e8e0e8"><path d="M3 2.500h12.500v8H4M2.500 0v12M1 .500h3v4H1zM6 13h6" /></svg>
        <span>ENG</span>
        <Clock>
          <div>03:36</div>
          <div>5/12/2024</div>
        </Clock>
        <Notice>
          <svg width="26" height="26">
            <path d="M1 2h16v14H7l-4 4v-4H1z" fill="#fff" />
            <path d="M4 6h10M4 9h10M4 12h8" stroke="#3b1040" />
            <circle cx="17" cy="17" r="8" fill="#571a68" stroke="#8a6a94" />
            <text x="17" y="21" fontSize="11" textAnchor="middle" fill="#fff">1</text>
          </svg>
        </Notice>
        <ShowDesktop />
      </Tray>
    </Taskbar>
  )
}

/* ---------- app ---------- */

const HiddenSvg = styled.svg`
  position: absolute;
`

function Defs() {
  return (
    <HiddenSvg width="0" height="0">
      <defs>
        <linearGradient id="plate" x2="0" y2="1"><stop stopColor="#a6a6a6" /><stop offset=".5" stopColor="#c8c8c8" /><stop offset="1" stopColor="#909090" /></linearGradient>
        <linearGradient id="level" x2="0" y2="1"><stop offset=".1" stopColor="#ff1010" /><stop offset=".7" stopColor="#30a020" /><stop offset="1" stopColor="#00c020" /></linearGradient>
        <linearGradient id="folder" x2="0" y2="1"><stop stopColor="#6ea2ea" /><stop offset="1" stopColor="#a8ccfa" /></linearGradient>
        <linearGradient id="info" x2="0" y2="1"><stop stopColor="#3aa0f0" /><stop offset="1" stopColor="#0a6cd8" /></linearGradient>
        <linearGradient id="glow"><stop stopColor="#541a44" /><stop offset="1" stopColor="#3a0830" /></linearGradient>
        <radialGradient id="redball" cy=".7"><stop stopColor="#f08a20" /><stop offset=".6" stopColor="#d83a18" /><stop offset="1" stopColor="#b01010" /></radialGradient>
      </defs>
    </HiddenSvg>
  )
}

const menu = [['', 'F', 'ile'], ['', 'T', 'ools'], ['', 'P', 'references'], ['', 'G', 'raph'], ['', 'H', 'elp'], ['', 'D', 'onate'], ['Pro ', 'U', 'pgrades']]

const tabs = ['SPL & Phase', 'All SPL', 'Distortion', 'Impulse', 'Filtered IR', 'GD', 'RT60', 'RT60 Decay', 'Clarity', 'Decay', 'Waterfall', 'Spectrogram', 'Captured']

const separateIcon = (
  <svg width="36" height="24">
    <rect x=".5" y=".5" width="35" height="23" fill="#161616" stroke="#777" />
    {[['#a01010', 0], ['#4040b0', 4], ['#107010', 8]].map(([c, y]) => (
      <path key={c} d={`M1 ${8 + y}C5 ${2 + y} 9 ${2 + y} 14 ${9 + y}s10 0 21 0`} fill="none" stroke={c} strokeWidth="1.500" />
    ))}
    <path d="M17 10V4M14 6l3-3 3 3M17 14v6M14 18l3 3 3-3" fill="none" stroke="#d8d8d8" strokeWidth="2" />
  </svg>
)
const scrollbarsIcon = (
  <svg width="36" height="24">
    <rect x="8" y="1" width="28" height="16" fill="#000" stroke="#2a2a2a" />
    <path d="M0 4l3-3 3 3zM0 14l3 3 3-3zM11 18v6l-3-3zM33 18v6l3-3z" fill="#000" />
    <path d="M1 7h4v4H1zM17 19h10v4H17z" fill="none" stroke="#000" strokeWidth="1.500" />
  </svg>
)
const freqIcon = (
  <svg width="36" height="24">
    <rect x=".5" y=".5" width="35" height="23" fill="#131313" stroke="#777" />
    <path d="M13.500 1v22M21.500 1v22M27.500 1v22M31.500 1v22" stroke="#8a8a8a" />
  </svg>
)
const limitsIcon = (
  <svg width="36" height="24">
    <rect x=".5" y=".5" width="35" height="23" fill="#131313" stroke="#777" />
    <path d="M18 9V3M15 5l3-3 3 3M18 15v6M15 19l3 3 3-3M10 12H3M6 8l-4 4 4 4M26 12h7M30 8l4 4-4 4" fill="none" stroke="#d8d8d8" strokeWidth="2" />
  </svg>
)
const gearIcon = (
  <svg width="24" height="24">
    <circle cx="12" cy="12" r="9.500" fill="none" stroke="#c4c4c4" strokeWidth="3" strokeDasharray="3 2" />
    <circle cx="12" cy="12" r="6" fill="#6a6a6a" stroke="#c4c4c4" strokeWidth="5" />
    <circle cx="12" cy="12" r="3" fill="#3a3a3a" />
  </svg>
)
const cameraIcon = (
  <svg width="32" height="24">
    <path d="M5 1h6v2h19v18H1V3h4z" fill="#dcdcdc" />
    <path d="M1 3l6 2-1 14-5 2z" fill="#f6f6f6" />
    <circle cx="20" cy="12" r="7.500" fill="#9a9a9a" /><circle cx="20" cy="12" r="5" fill="#c8c8c8" /><circle cx="20" cy="12" r="3" fill="#333" />
  </svg>
)

export default function App() {
  return (
    <Window>
      <GlobalStyle />
      <Defs />
      <TitleBar>
        <TopStrip />
        <svg width="16" height="16">
          <rect width="16" height="16" fill="#8fa4b8" />
          <path d="M1 12q7-4 14 0l-1 3H2z" fill="#e8e8e8" />
          <path d="M8 2l4 10H4z" fill="#222" /><circle cx="9" cy="7" r="2.500" fill="#c02020" />
        </svg>
        <TitleText>REW V5.20.13</TitleText>
        <WinButton aria-label="Minimise"><svg width="10" height="10"><path d="M0 5.500h10" stroke="#222" /></svg></WinButton>
        <WinButton aria-label="Restore">
          <svg width="11" height="11" fill="none" stroke="#222"><path d="M.5 2.500h8v8h-8zM2.500 2.500v-2h8v8h-2" /></svg>
        </WinButton>
        <WinButton aria-label="Close"><svg width="11" height="11" stroke="#222"><path d="M0 0l10 10M10 0L0 10" /></svg></WinButton>
      </TitleBar>
      <MenuBar>
        {menu.map(([a, u, b]) => <MenuItem key={u + b}>{a}<u>{u}</u>{b}</MenuItem>)}
      </MenuBar>
      <Body>
        <Toolbar>
          <ToolSet groups={tools.left} />
          <ToolSet groups={tools.center} />
          <ToolSet groups={tools.right} />
        </Toolbar>
        <Main>
          <Scrollbar parts={[388, 560, 2]} />
          <Sidebar />
          <Graph>
            <GraphHeader>
              <Tool>{cameraIcon}Capture</Tool>
              <Tabs>
                {tabs.map((t, i) => <Tab key={t} $on={i === 1} $first={i === 0}>{t}</Tab>)}
              </Tabs>
              <ToolGroup $gap={28}>
                <Tool>{separateIcon}Separate</Tool>
                <ToolGroup $gap={12}>
                  <Tool>{scrollbarsIcon}Scrollbars</Tool>
                  <Tool>{freqIcon}Freq. Axis</Tool>
                  <Tool>{limitsIcon}Limits</Tool>
                  <Tool>{gearIcon}Controls</Tool>
                </ToolGroup>
              </ToolGroup>
            </GraphHeader>
            <GraphPlot />
            <LegendPanel />
          </Graph>
        </Main>
      </Body>
      <Status>
        <StatusCell $w={78}>168/348MB</StatusCell>
        <StatusCell $w={43}>48 kHz</StatusCell>
        <StatusCell $w={99}>16-bit in, 16-bit out</StatusCell>
        <Bits $w={269}>{[1, 2, 3, 4, 5, 6, 7, 8].map(n => <span key={n}>0000</span>)}</Bits>
        <StatusCell $w={10} />
        <StatusCell $w={194}>Peak input before clipping 122 dB SPL</StatusCell>
        <StatusFill />
      </Status>
      <WindowsTaskbar />
    </Window>
  )
}
